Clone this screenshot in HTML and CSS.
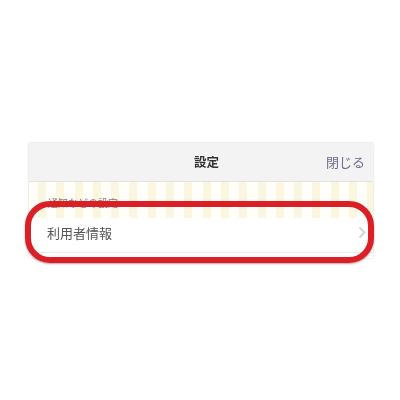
FILE: index.html
```html
<!DOCTYPE html>
<html lang="ja">
<head>
<meta charset="utf-8">
<title>設定</title>
<link rel="stylesheet" href="styles.css">
</head>
<body>
<main class="stage">
  <section class="panel">
    <header class="bar">
      <span class="bar-spacer"></span>
      <h1 class="bar-title">設定</h1>
      <span class="bar-action">閉じる</span>
    </header>
    <div class="section-label"><span>通知などの設定</span></div>
    <div class="row">
      <span class="row-label">利用者情報</span>
      <svg class="chevron" width="8" height="13" viewBox="0 0 8 13"><path d="M1.5 1.5 6.5 6.5 1.5 11.5" fill="none" stroke="#d4d4d8" stroke-width="2"/></svg>
    </div>
    <div class="row-end"></div>
  </section>
  <div class="highlight"></div>
</main>
</body>
</html>
```
FILE: styles.css
```css
* { box-sizing: border-box; }
html, body { margin: 0; height: 100%; background: #fff; }
.stage {
  position: relative;
  width: 400px;
  height: 400px;
  padding: 143px 27px 0 29px;
  font-family: "Noto Sans CJK JP", "Liberation Sans", sans-serif;
}
.panel {
  height: 115px;
  background: #fff;
  box-shadow: 0 0 2px rgba(0,0,0,.2);
  display: flex;
  flex-direction: column;
  filter: blur(.75px);
}
.bar {
  height: 39px;
  flex: none;
  display: flex;
  align-items: center;
  justify-content: space-between;
  padding: 0 8px 2px 8px;
  background: #f3f3f4;
  border-bottom: 1px solid #e2e2e2;
}
.bar-spacer { width: 50px; }
.bar-title { margin: 0; font-size: 12.5px; font-weight: 700; color: #333; }
.bar-action { font-size: 13px; color: #6d6d8e; }
.section-label {
  height: 36px;
  flex: none;
  padding: 14px 0 0 19px;
  font-size: 10px;
  line-height: 14px;
  color: #777;
  background: repeating-linear-gradient(90deg, #fffef9 0 9px, #fbf6e0 9px 17px, #fffef9 17px 18.3px);
}
.row {
  height: 34px;
  flex: none;
  display: flex;
  align-items: center;
  justify-content: space-between;
  padding: 0 7px 6px 18px;
  background: #fff;
}
.row-label { font-size: 13px; color: #555; }
.row-end { height: 1px; background: #ececec; }
.highlight {
  position: absolute;
  left: 25px;
  top: 201px;
  width: 349px;
  height: 62px;
  border: 6px solid #dc1f26;
  border-radius: 25px;
  box-shadow: 0 1px 2px rgba(0,0,0,.35);
}
```
